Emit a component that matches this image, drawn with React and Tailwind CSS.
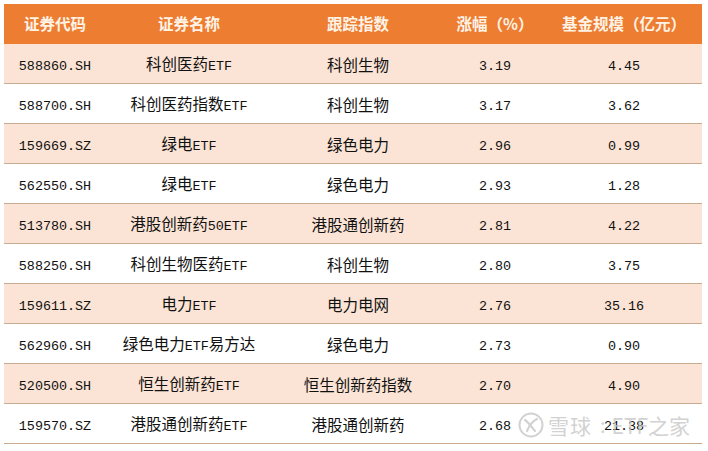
import React from "react";

const rows = [
  ["588860.SH", "科创医药ETF", "科创生物", "3.19", "4.45"],
  ["588700.SH", "科创医药指数ETF", "科创生物", "3.17", "3.62"],
  ["159669.SZ", "绿电ETF", "绿色电力", "2.96", "0.99"],
  ["562550.SH", "绿电ETF", "绿色电力", "2.93", "1.28"],
  ["513780.SH", "港股创新药50ETF", "港股通创新药", "2.81", "4.22"],
  ["588250.SH", "科创生物医药ETF", "科创生物", "2.80", "3.75"],
  ["159611.SZ", "电力ETF", "电力电网", "2.76", "35.16"],
  ["562960.SH", "绿色电力ETF易方达", "绿色电力", "2.73", "0.90"],
  ["520500.SH", "恒生创新药ETF", "恒生创新药指数", "2.70", "4.90"],
  ["159570.SZ", "港股通创新药ETF", "港股通创新药", "2.68", "21.38"],
];

function Mixed({ text }) {
  const parts = text.match(/[\x00-\x7F]+|[^\x00-\x7F]+/g) || [];
  return (
    <>
      {parts.map((p, i) =>
        /^[\x00-\x7F]+$/.test(p) ? (
          <span key={i} className="font-['Liberation_Mono',monospace] text-[13.4px]">
            {p}
          </span>
        ) : (
          <span key={i} className="font-['Noto_Sans_CJK_SC',sans-serif] text-[15.5px]">
            {p}
          </span>
        )
      )}
    </>
  );
}

const widths = ["w-[102px]", "w-[166px]", "w-[172px]", "w-[102px]", "w-[156px]"];

export default function App() {
  return (
    <div className="w-[708px] h-[451px] bg-white relative overflow-hidden">
      <div className="pt-[4px] pl-[4px]">
        <div className="w-[698px]">
          <div className="flex h-[40px] bg-[#ED7D31] items-center text-[#FFF3E6] font-bold font-['Noto_Sans_CJK_SC',sans-serif] text-[15.5px]">
            <div className={`${widths[0]} text-center`}>证券代码</div>
            <div className={`${widths[1]} text-center`}>证券名称</div>
            <div className={`${widths[2]} text-center`}>跟踪指数</div>
            <div className={`${widths[3]} text-center`}>涨幅（%）</div>
            <div className={`${widths[4]} text-center`}>基金规模（亿元）</div>
          </div>
          {rows.map((r, i) => (
            <div
              key={i}
              className={`flex h-[40px] items-center border-b border-[#C8AB90] text-[#111] ${
                i % 2 === 0 ? "bg-[#FBE4D5]" : "bg-white"
              }`}
            >
              {r.map((c, j) => (
                <div key={j} className={`${widths[j]} text-center leading-none pt-[3px]`}>
                  <Mixed text={c} />
                </div>
              ))}
            </div>
          ))}
        </div>
      </div>
      <div className="absolute left-[518px] top-[412px] flex items-center gap-[4px] text-[#c4c4c4] opacity-75 pointer-events-none">
        <svg width="26" height="26" viewBox="0 0 26 26">
          <circle cx="13" cy="13" r="11.5" fill="none" stroke="#c4c4c4" strokeWidth="2" />
          <path d="M7 8 C10 10, 13 14, 17 19" fill="none" stroke="#c4c4c4" strokeWidth="2.2" strokeLinecap="round" />
          <path d="M19 7 C15 9, 11 14, 9 19" fill="none" stroke="#c4c4c4" strokeWidth="2.2" strokeLinecap="round" />
        </svg>
        <span className="font-['Noto_Sans_CJK_SC',sans-serif] text-[21px] leading-none tracking-[1px]">雪球</span>
        <span className="font-['Noto_Sans_CJK_SC',sans-serif] text-[20px] leading-none ml-[4px]">:</span>
        <span className="font-['Noto_Sans_CJK_SC',sans-serif] text-[21px] leading-none ml-[2px]">ETF之家</span>
      </div>
    </div>
  );
}
